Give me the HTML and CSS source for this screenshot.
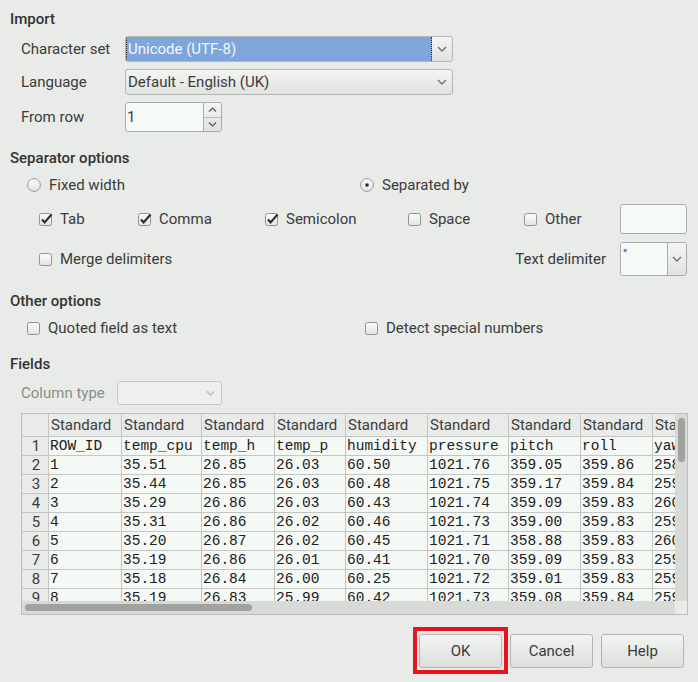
FILE: index.html
```html
<!DOCTYPE html>
<html>
<head>
<meta charset="utf-8">
<link rel="stylesheet" href="styles.css">
</head>
<body>
<div class="dialog">
  <div class="heading">Import</div>
  <div class="import-rows">
    <div class="form-row h26">
      <div class="lbl">Character set</div>
      <div class="select focused">
        <div class="select-value">Unicode (UTF-8)</div>
        <div class="select-btn"><svg width="10" height="6" viewBox="0 0 10 6"><polyline points="1,1 5,5 9,1" fill="none" stroke="#6f726f" stroke-width="1.4"/></svg></div>
      </div>
    </div>
    <div class="form-row h26">
      <div class="lbl">Language</div>
      <div class="select">
        <div class="select-value">Default - English (UK)</div>
        <div class="select-btn"><svg width="10" height="6" viewBox="0 0 10 6"><polyline points="1,1 5,5 9,1" fill="none" stroke="#6f726f" stroke-width="1.4"/></svg></div>
      </div>
    </div>
    <div class="form-row h30">
      <div class="lbl">From row</div>
      <div class="spin">
        <div class="spin-input">1</div>
        <div class="spin-btns">
          <div class="spin-btn"><svg width="9" height="5" viewBox="0 0 9 5"><polyline points="1,4.5 4.5,1 8,4.5" fill="none" stroke="#555855" stroke-width="1.2"/></svg></div>
          <div class="spin-btn"><svg width="9" height="5" viewBox="0 0 9 5"><polyline points="1,0.5 4.5,4 8,0.5" fill="none" stroke="#555855" stroke-width="1.2"/></svg></div>
        </div>
      </div>
    </div>
  </div>

  <div class="heading mt17">Separator options</div>
  <div class="radio-row">
    <div class="opt"><svg class="radio" width="14" height="14" viewBox="0 0 14 14"><defs><linearGradient id="rg" x1="0" y1="0" x2="0" y2="1"><stop offset="0" stop-color="#fbfcfb"/><stop offset="1" stop-color="#e2e4e2"/></linearGradient></defs><circle cx="7" cy="7" r="6.4" fill="url(#rg)" stroke="#969996"/></svg><span>Fixed width</span></div>
    <div class="opt"><svg class="radio" width="14" height="14" viewBox="0 0 14 14"><circle cx="7" cy="7" r="6.4" fill="url(#rg)" stroke="#969996"/><circle cx="7" cy="7" r="1.8" fill="#2e2e2e"/></svg><span>Separated by</span></div>
  </div>
  <div class="check-row">
    <div class="opt"><svg class="cb" width="15" height="15" viewBox="0 0 15 15"><rect x="0.5" y="1.5" width="12" height="12" rx="2" fill="url(#rg)" stroke="#8f928f"/><polyline points="3,7.5 5.6,10.4 12.5,2.5" fill="none" stroke="#2c2c2c" stroke-width="2.1"/></svg><span>Tab</span></div>
    <div class="opt"><svg class="cb" width="15" height="15" viewBox="0 0 15 15"><rect x="0.5" y="1.5" width="12" height="12" rx="2" fill="url(#rg)" stroke="#8f928f"/><polyline points="3,7.5 5.6,10.4 12.5,2.5" fill="none" stroke="#2c2c2c" stroke-width="2.1"/></svg><span>Comma</span></div>
    <div class="opt"><svg class="cb" width="15" height="15" viewBox="0 0 15 15"><rect x="0.5" y="1.5" width="12" height="12" rx="2" fill="url(#rg)" stroke="#8f928f"/><polyline points="3,7.5 5.6,10.4 12.5,2.5" fill="none" stroke="#2c2c2c" stroke-width="2.1"/></svg><span>Semicolon</span></div>
    <div class="opt"><svg class="cb" width="15" height="15" viewBox="0 0 15 15"><rect x="0.5" y="1.5" width="12" height="12" rx="2" fill="url(#rg)" stroke="#8f928f"/></svg><span>Space</span></div>
    <div class="opt"><svg class="cb" width="15" height="15" viewBox="0 0 15 15"><rect x="0.5" y="1.5" width="12" height="12" rx="2" fill="url(#rg)" stroke="#8f928f"/></svg><span>Other</span></div>
    <div class="text-input"></div>
  </div>
  <div class="merge-row">
    <div class="opt"><svg class="cb" width="15" height="15" viewBox="0 0 15 15"><rect x="0.5" y="1.5" width="12" height="12" rx="2" fill="url(#rg)" stroke="#8f928f"/></svg><span>Merge delimiters</span></div>
    <div class="delim">
      <span class="delim-lbl">Text delimiter</span>
      <div class="combo">
        <div class="combo-input">"</div>
        <div class="combo-btn"><svg width="10" height="6" viewBox="0 0 10 6"><polyline points="1,1 5,5 9,1" fill="none" stroke="#6f726f" stroke-width="1.4"/></svg></div>
      </div>
    </div>
  </div>

  <div class="heading mt16">Other options</div>
  <div class="other-row">
    <div class="opt"><svg class="cb" width="15" height="15" viewBox="0 0 15 15"><rect x="0.5" y="1.5" width="12" height="12" rx="2" fill="url(#rg)" stroke="#8f928f"/></svg><span>Quoted field as text</span></div>
    <div class="opt"><svg class="cb" width="15" height="15" viewBox="0 0 15 15"><rect x="0.5" y="1.5" width="12" height="12" rx="2" fill="url(#rg)" stroke="#8f928f"/></svg><span>Detect special numbers</span></div>
  </div>

  <div class="heading mt17">Fields</div>
  <div class="coltype-row">
    <div class="coltype-lbl">Column type</div>
    <div class="coltype-select"><svg width="9" height="5" viewBox="0 0 9 5"><polyline points="1,0.5 4.5,4 8,0.5" fill="none" stroke="#b3b6b3" stroke-width="1.2"/></svg></div>
  </div>

  <div class="grid-frame">
    <div class="grid-view">
      <div class="grid">
        <div class="c corner"></div>
        <div class="c hd">Standard</div><div class="c hd">Standard</div><div class="c hd">Standard</div><div class="c hd">Standard</div><div class="c hd">Standard</div><div class="c hd">Standard</div><div class="c hd">Standard</div><div class="c hd">Standard</div><div class="c hd">Standard</div>

        <div class="c rn">1</div><div class="c d">ROW_ID</div><div class="c d">temp_cpu</div><div class="c d">temp_h</div><div class="c d">temp_p</div><div class="c d">humidity</div><div class="c d">pressure</div><div class="c d">pitch</div><div class="c d">roll</div><div class="c d">yaw</div>
        <div class="c rn">2</div><div class="c d">1</div><div class="c d">35.51</div><div class="c d">26.85</div><div class="c d">26.03</div><div class="c d">60.50</div><div class="c d">1021.76</div><div class="c d">359.05</div><div class="c d">359.86</div><div class="c d">258.71</div>
        <div class="c rn">3</div><div class="c d">2</div><div class="c d">35.44</div><div class="c d">26.85</div><div class="c d">26.03</div><div class="c d">60.48</div><div class="c d">1021.75</div><div class="c d">359.17</div><div class="c d">359.84</div><div class="c d">259.12</div>
        <div class="c rn">4</div><div class="c d">3</div><div class="c d">35.29</div><div class="c d">26.86</div><div class="c d">26.03</div><div class="c d">60.43</div><div class="c d">1021.74</div><div class="c d">359.09</div><div class="c d">359.83</div><div class="c d">260.02</div>
        <div class="c rn">5</div><div class="c d">4</div><div class="c d">35.31</div><div class="c d">26.86</div><div class="c d">26.02</div><div class="c d">60.46</div><div class="c d">1021.73</div><div class="c d">359.00</div><div class="c d">359.83</div><div class="c d">259.90</div>
        <div class="c rn">6</div><div class="c d">5</div><div class="c d">35.20</div><div class="c d">26.87</div><div class="c d">26.02</div><div class="c d">60.45</div><div class="c d">1021.71</div><div class="c d">358.88</div><div class="c d">359.83</div><div class="c d">260.11</div>
        <div class="c rn">7</div><div class="c d">6</div><div class="c d">35.19</div><div class="c d">26.86</div><div class="c d">26.01</div><div class="c d">60.41</div><div class="c d">1021.70</div><div class="c d">359.09</div><div class="c d">359.83</div><div class="c d">259.95</div>
        <div class="c rn">8</div><div class="c d">7</div><div class="c d">35.18</div><div class="c d">26.84</div><div class="c d">26.00</div><div class="c d">60.25</div><div class="c d">1021.72</div><div class="c d">359.01</div><div class="c d">359.83</div><div class="c d">259.87</div>
        <div class="c rn">9</div><div class="c d">8</div><div class="c d">35.19</div><div class="c d">26.83</div><div class="c d">25.99</div><div class="c d">60.42</div><div class="c d">1021.73</div><div class="c d">359.08</div><div class="c d">359.84</div><div class="c d">259.93</div>
      </div>
    </div>
    <div class="vscroll"><div class="vthumb"></div></div>
    <div class="hscroll"><div class="hthumb"></div></div>
    <div class="scorner"></div>
  </div>

  <div class="buttons">
    <div class="highlight"><div class="btn">OK</div></div>
    <div class="btn plain">Cancel</div>
    <div class="btn plain">Help</div>
  </div>
</div>
</body>
</html>
```

FILE: styles.css
```css
* { box-sizing: border-box; }
html, body {
  margin: 0;
  padding: 0;
  background: #e8ebe8;
}
body {
  font-family: Roboto, "Liberation Sans", sans-serif;
  font-size: 15px;
  color: #3b3b3b;
  width: 698px;
  height: 682px;
  overflow: hidden;
}
.dialog {
  padding: 10px 11px 0 10px;
}
.heading {
  height: 18px;
  line-height: 18px;
  font-weight: 500;
  color: #333;
}
.mt17 { margin-top: 17px; }
.mt16 { margin-top: 16px; }

.import-rows {
  margin-top: 8px;
  padding-left: 11px;
  display: flex;
  flex-direction: column;
  gap: 7px;
}
.form-row {
  display: flex;
  align-items: center;
}
.h26 { height: 26px; }
.h30 { height: 30px; }
.lbl { width: 104px; }

.select {
  width: 328px;
  height: 26px;
  display: flex;
  border: 1px solid #b4b7b4;
  border-radius: 3px;
  background: linear-gradient(#f3f5f3, #dfe2df);
  overflow: hidden;
}
.select-value {
  flex: 1;
  padding-left: 2px;
  line-height: 24px;
}
.select.focused .select-value {
  background: #7ea6da;
  color: #f2f6fb;
  border-left: 1px dotted #333;
  border-right: 1px dotted #333;
  padding-left: 1px;
}
.select-btn {
  width: 20px;
  display: flex;
  align-items: center;
  justify-content: center;
}

.spin {
  display: flex;
  width: 97px;
  height: 30px;
  border: 1px solid #a9aca9;
  border-radius: 3px;
  overflow: hidden;
}
.spin-input {
  width: 77px;
  background: #f6faf6;
  line-height: 28px;
  padding-left: 1px;
}
.spin-btns {
  flex: 1;
  display: flex;
  flex-direction: column;
  border-left: 1px solid #a9aca9;
  background: linear-gradient(#f3f5f3, #dfe2df);
}
.spin-btn {
  flex: 1;
  display: flex;
  align-items: center;
  justify-content: center;
}
.spin-btn + .spin-btn { border-top: 1px solid #b9bcb9; }

.opt {
  display: flex;
  align-items: center;
}
.radio { margin-right: 8px; flex: none; }
.cb { margin-right: 6px; flex: none; }

.radio-row {
  margin-top: 7px;
  height: 22px;
  padding-left: 17px;
  display: grid;
  grid-template-columns: 333px auto;
  align-items: center;
}
.check-row {
  margin-top: 8px;
  height: 30px;
  padding-left: 29px;
  display: grid;
  grid-template-columns: 99px 127px 143px 116px 96px 67px;
  align-items: center;
}
.text-input {
  height: 30px;
  width: 67px;
  background: #f6faf6;
  border: 1px solid #a9aca9;
  border-radius: 3px;
}
.merge-row {
  margin-top: 8px;
  height: 34px;
  padding-left: 29px;
  display: flex;
  align-items: center;
  justify-content: space-between;
}
.delim {
  display: flex;
  align-items: center;
}
.delim-lbl { margin-right: 14px; }
.combo {
  display: flex;
  width: 67px;
  height: 34px;
  border: 1px solid #a9aca9;
  border-radius: 3px;
  overflow: hidden;
}
.combo-input {
  width: 46px;
  background: #f6faf6;
  padding: 5px 0 0 2px;
  font-size: 13px;
  line-height: 14px;
}
.combo-btn {
  flex: 1;
  border-left: 1px solid #a9aca9;
  background: linear-gradient(#f3f5f3, #dfe2df);
  display: flex;
  align-items: center;
  justify-content: center;
}

.other-row {
  margin-top: 8px;
  height: 20px;
  padding-left: 17px;
  display: grid;
  grid-template-columns: 338px auto;
  align-items: center;
}
.coltype-row {
  margin-top: 8px;
  height: 24px;
  padding-left: 11px;
  display: flex;
  align-items: center;
}
.coltype-lbl {
  width: 96px;
  color: #8b8d8b;
}
.coltype-select {
  width: 105px;
  height: 24px;
  border: 1px solid #c6c9c6;
  border-radius: 3px;
  background: #edf0ed;
  display: flex;
  align-items: center;
  justify-content: flex-end;
  padding-right: 6px;
}

.grid-frame {
  margin-top: 8px;
  margin-left: 11px;
  width: 667px;
  height: 202px;
  border: 1px solid #bcbfbc;
  display: grid;
  grid-template-columns: 1fr 12px;
  grid-template-rows: 1fr 13px;
  background: #e8ebe8;
}
.grid-view {
  overflow: hidden;
}
.grid {
  display: grid;
  grid-template-columns: 27px 73px 80px 73px 71px 82px 81px 72px 72px 80px;
  grid-template-rows: 23px;
  grid-auto-rows: 19px;
  width: 711px;
}
.c {
  border-right: 1px solid #c3c6c3;
  border-bottom: 1px solid #c3c6c3;
  white-space: nowrap;
  overflow: hidden;
}
.corner, .hd, .rn { background: #e8ebe8; }
.hd {
  padding-left: 2px;
  line-height: 22px;
  color: #3d3d3d;
}
.rn {
  text-align: center;
  line-height: 19px;
  padding-left: 2px;
}
.d {
  background: #f5f9f5;
  font-family: "Liberation Mono", "DejaVu Sans Mono", monospace;
  font-size: 14.5px;
  line-height: 18px;
  padding-left: 1px;
  color: #202020;
}
.vscroll {
  background: #d7dad7;
  padding: 4px 2px 0 3px;
}
.vthumb {
  width: 7px;
  height: 44px;
  border-radius: 4px;
  background: #9fa29f;
}
.hscroll {
  background: #d7dad7;
  padding: 3px 0 0 3px;
}
.hthumb {
  width: 227px;
  height: 7px;
  border-radius: 4px;
  background: #9fa29f;
}
.scorner { background: #e8ebe8; }

.buttons {
  margin-top: 12px;
  display: flex;
  justify-content: flex-end;
  align-items: flex-start;
  padding-right: 3px;
}
.highlight {
  border: 4px solid #e5141f;
  padding: 3px 2px 2px 2px;
  margin-right: 2px;
}
.btn {
  width: 83px;
  height: 34px;
  border: 1px solid #b1b4b1;
  border-radius: 3px;
  background: linear-gradient(#f2f4f2, #dcdfdc);
  display: flex;
  align-items: center;
  justify-content: center;
  color: #3b3b3b;
}
.btn.plain { margin-top: 7px; }
.btn.plain + .btn.plain { margin-left: 8px; }
```
